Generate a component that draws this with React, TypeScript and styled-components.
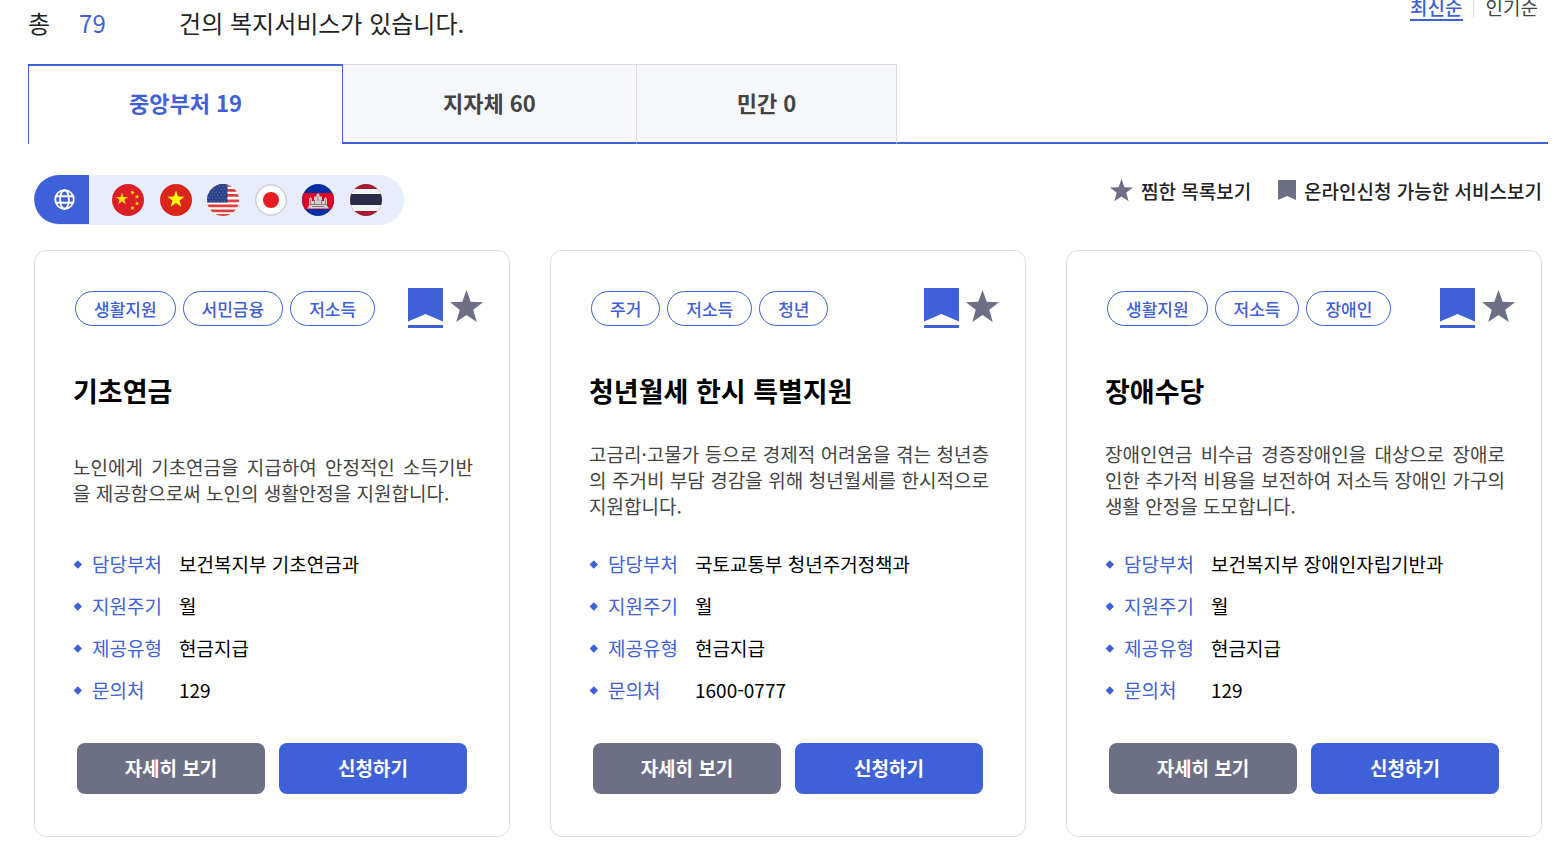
import React, { useState } from "react";
import styled, { createGlobalStyle } from "styled-components";

const BLUE = "#3f61d7";
const GRAY = "#6d7084";

const GlobalStyle = createGlobalStyle`
  *, *::before, *::after { box-sizing: border-box; }
  body {
    margin: 0;
    background: #fff;
    color: #222;
    font-family: "Noto Sans CJK KR", "Noto Sans", sans-serif;
    font-size: 19px;
  }
  h1, h2, p, ul, dl, dd { margin: 0; padding: 0; }
  ul { list-style: none; }
  button {
    margin: 0;
    padding: 0;
    border: 0;
    background: none;
    color: inherit;
    font: inherit;
    cursor: pointer;
  }
`;

const Page = styled.main`
  padding: 0 15px 12px 28px;
`;

const Header = styled.header`
  display: flex;
  justify-content: space-between;
  align-items: flex-start;
  height: 64px;
  padding-right: 10px;
`;

const Total = styled.h1`
  display: flex;
  font-size: 24px;
  font-weight: 400;
  line-height: 46px;
`;

const TotalCount = styled.span`
  width: 100px;
  margin-left: 29px;
  color: ${BLUE};
`;

const SortList = styled.div`
  display: flex;
`;

const SortButton = styled.button<{ $active: boolean }>`
  height: 21px;
  padding-bottom: 6px;
  border-bottom: 2px solid ${(p) => (p.$active ? BLUE : "transparent")};
  color: ${(p) => (p.$active ? BLUE : "#444")};
  font-weight: ${(p) => (p.$active ? 500 : 400)};
  line-height: 13px;
`;

const SortDivider = styled.span`
  width: 1px;
  height: 18px;
  margin: 0 12px 0 10px;
  background: #ddd;
`;

const Tabs = styled.div`
  display: flex;
  height: 80px;
  background: linear-gradient(${BLUE}, ${BLUE}) bottom / 100% 2px no-repeat;
`;

const Tab = styled.button<{ $active: boolean }>`
  display: flex;
  align-items: center;
  gap: 6px;
  padding: 0 100px ${(p) => (p.$active ? 6 : 4)}px;
  border-style: solid;
  border-width: ${(p) => (p.$active ? "2px 1px 0" : "1px 1px 2px 0")};
  border-color: ${(p) => (p.$active ? BLUE : `#ddd #ddd ${BLUE}`)};
  background: ${(p) => (p.$active ? "#fff" : "#f6f7fb")};
  color: ${(p) => (p.$active ? BLUE : "#444")};
  font-size: 22px;
  font-weight: 700;
`;

const Toolbar = styled.div`
  display: flex;
  justify-content: space-between;
  align-items: flex-start;
  padding: 31px 6px 25px;
`;

const LanguageBar = styled.div`
  display: flex;
  width: 370px;
  height: 50px;
  border-radius: 25px;
  overflow: hidden;
  background: #e7eefa;
`;

const LanguageMark = styled.span`
  display: flex;
  align-items: center;
  justify-content: center;
  width: 55px;
  height: 49px;
  padding-left: 6px;
  border-radius: 0 0 0 25px;
  background: ${BLUE};
`;

const FlagList = styled.div`
  display: flex;
  flex: 1;
  align-items: center;
  justify-content: space-between;
  padding: 0 22px 0 23px;
`;

const FlagButton = styled.button`
  display: flex;
  border-radius: 50%;
`;

const Filters = styled.div`
  display: flex;
  gap: 27px;
`;

const FilterButton = styled.button`
  display: flex;
  align-items: center;
  gap: 8px;
  height: 30px;
  font-weight: 500;
`;

const CardGrid = styled.section`
  display: grid;
  grid-template-columns: repeat(3, minmax(0, 1fr));
  gap: 40px;
  padding: 0 6px;
`;

const Card = styled.article`
  padding: 37px 0 42px;
  border: 1px solid #ddd;
  border-radius: 12px;
`;

const CardHead = styled.div`
  display: flex;
  justify-content: space-between;
  padding: 0 26px 0 40px;
`;

const TagList = styled.ul`
  display: flex;
  gap: 7px;
  padding-top: 3px;
`;

const Tag = styled.li`
  height: 35px;
  padding: 0 18px;
  border: 1px solid ${BLUE};
  border-radius: 18px;
  color: ${BLUE};
  font-size: 17px;
  font-weight: 500;
  line-height: 33px;
`;

const Marks = styled.div`
  display: flex;
  align-items: flex-start;
  gap: 7px;
`;

const StarButton = styled.button`
  display: flex;
  padding-top: 2px;
`;

const CardTitle = styled.h2`
  padding: 43px 38px 0;
  color: #000;
  font-size: 27px;
  font-weight: 700;
  line-height: 40px;
`;

const Description = styled.div`
  display: flex;
  align-items: center;
  min-height: 78px;
  margin-top: 30px;
  padding: 0 36px 0 38px;
  color: #444;
  line-height: 26px;
  text-align: justify;
`;

const Facts = styled.dl`
  display: grid;
  gap: 14px;
  padding: 31px 38px 39px;
  color: #000;
  line-height: 28px;
`;

const Fact = styled.div`
  display: flex;
  align-items: center;
`;

const Term = styled.dt`
  display: flex;
  align-items: center;
  gap: 10px;
  width: 106px;
  color: ${BLUE};
`;

const Actions = styled.div`
  display: grid;
  grid-template-columns: 1fr 1fr;
  gap: 14px;
  padding: 0 42px;
`;

const ActionButton = styled.button<{ $primary?: boolean }>`
  height: 51px;
  padding-bottom: 2px;
  border-radius: 8px;
  background: ${(p) => (p.$primary ? BLUE : GRAY)};
  color: #fff;
  font-weight: 700;
`;

const Star = ({ size }: { size: number }) => (
  <svg width={size} height={size} viewBox="0 0 32 32" aria-hidden="true">
    <path
      fill={GRAY}
      d="M16 0l4.1 11.4L32 11.8l-9.4 7.4L25.9 31 16 24.3 6.100 31l3.300-11.800L0 11.800l11.900-.4z"
    />
  </svg>
);

const SmallBookmark = () => (
  <svg width="18" height="20" viewBox="0 0 18 20" aria-hidden="true">
    <path fill={GRAY} d="M0 0h18v20l-9-4-9 4z" />
  </svg>
);

const CardBookmark = () => (
  <svg width="35" height="40" viewBox="0 0 35 40" role="img" aria-label="온라인신청 가능">
    <path fill={BLUE} d="M0 0h35v33.500L17.500 26 0 33.500zM0 37h35v3H0z" />
  </svg>
);

const Diamond = () => (
  <svg width="9" height="9" viewBox="0 0 9 9" aria-hidden="true">
    <path
      fill={BLUE}
      stroke={BLUE}
      strokeWidth="1.500"
      strokeLinejoin="round"
      d="M4.800 1.200L8 4.500 4.800 7.800 1.600 4.500z"
    />
  </svg>
);

const Globe = () => (
  <svg
    width="21"
    height="21"
    viewBox="0 0 21 21"
    fill="none"
    stroke="#fff"
    strokeWidth="1.900"
    aria-hidden="true"
  >
    <circle cx="10.500" cy="10.500" r="9.300" />
    <ellipse cx="10.500" cy="10.500" rx="4.400" ry="9.300" />
    <path d="M1.800 7.300h17.400M1.800 13.700h17.400" />
  </svg>
);

const starPoints = (cx: number, cy: number, r: number, turn = 0) =>
  Array.from({ length: 10 }, (_, i) => {
    const angle = ((i * 36 - 90 + turn) * Math.PI) / 180;
    const radius = i % 2 ? r * 0.4 : r;
    return `${cx + radius * Math.cos(angle)},${cy + radius * Math.sin(angle)}`;
  }).join(" ");

const flags: { code: string; name: string; art: React.ReactNode }[] = [
  {
    code: "cn",
    name: "중국어",
    art: (
      <>
        <path fill="#dc1f26" d="M0 0h32v32H0z" />
        <g fill="#ffde00">
          <polygon points={starPoints(10, 15, 6.5)} />
          <polygon points={starPoints(20.500, 8.500, 2.500, 20)} />
          <polygon points={starPoints(25, 12.800, 2.500, 10)} />
          <polygon points={starPoints(25, 19.500, 2.500)} />
          <polygon points={starPoints(20.500, 24, 2.500, 20)} />
        </g>
      </>
    ),
  },
  {
    code: "vn",
    name: "베트남어",
    art: (
      <>
        <path fill="#da251d" d="M0 0h32v32H0z" />
        <polygon fill="#ff0" points={starPoints(16, 15.500, 9)} />
      </>
    ),
  },
  {
    code: "us",
    name: "영어",
    art: (
      <>
        <path fill="#fff" d="M0 0h32v32H0z" />
        {[0, 5, 10, 15.500, 20.500, 25.500, 30].map((y) => (
          <path key={y} fill="#e0403f" d={`M0 ${y}h32v2.700H0z`} />
        ))}
        <path fill="#2a4088" d="M0 0h20.500v18.500H0z" />
        <g fill="#8b9ac4">
          {[2, 5, 8, 11, 14, 17].map((y, row) =>
            [2, 5.500, 9, 12.500, 16, 19].map((x) => (
              <circle key={`${x}-${y}`} cx={x - (row % 2) * 1.7} cy={y} r="0.600" />
            ))
          )}
        </g>
      </>
    ),
  },
  {
    code: "jp",
    name: "일본어",
    art: (
      <>
        <circle cx="16" cy="16" r="15.300" fill="#fff" stroke="#c8cbd0" strokeWidth="1.400" />
        <circle cx="16" cy="16" r="8" fill="#e81c24" />
      </>
    ),
  },
  {
    code: "kh",
    name: "캄보디아어",
    art: (
      <>
        <path fill="#032ea1" d="M0 0h32v32H0z" />
        <path fill="#e00025" d="M0 9h32v16H0z" />
        <path
          fill="#d5d0d0"
          d="M5 24.500l2-3V15l1.500-2 1.500 2v2h2v-4l1-1 1 1 .5-2 1.500-2 1.500 2 .5 2 1-1 1 1v4h2v-2l1.500-2 1.500 2v6.500l2 3z"
        />
        <path
          stroke="#8d7f83"
          strokeWidth="1"
          d="M7 20.500h18M8.500 15v5M12.500 16v4M16 12v5M19.500 16v4M23.500 15v5M10 22.500h12"
        />
      </>
    ),
  },
  {
    code: "th",
    name: "태국어",
    art: (
      <>
        <path fill="#a51931" d="M0 0h32v32H0z" />
        <path fill="#f4f5f8" d="M0 5h32v22H0z" />
        <path fill="#2d2a4a" d="M0 10h32v11H0z" />
      </>
    ),
  },
];

const tabs = [
  { label: "중앙부처", count: 19 },
  { label: "지자체", count: 60 },
  { label: "민간", count: 0 },
];

const sorts = ["최신순", "인기순"];

const services = [
  {
    tags: ["생활지원", "서민금융", "저소득"],
    title: "기초연금",
    description:
      "노인에게 기초연금을 지급하여 안정적인 소득기반을 제공함으로써 노인의 생활안정을 지원합니다.",
    department: "보건복지부 기초연금과",
    contact: "129",
  },
  {
    tags: ["주거", "저소득", "청년"],
    title: "청년월세 한시 특별지원",
    description:
      "고금리·고물가 등으로 경제적 어려움을 겪는 청년층의 주거비 부담 경감을 위해 청년월세를 한시적으로 지원합니다.",
    department: "국토교통부 청년주거정책과",
    contact: "1600-0777",
  },
  {
    tags: ["생활지원", "저소득", "장애인"],
    title: "장애수당",
    description:
      "장애인연금 비수급 경증장애인을 대상으로 장애로 인한 추가적 비용을 보전하여 저소득 장애인 가구의 생활 안정을 도모합니다.",
    department: "보건복지부 장애인자립기반과",
    contact: "129",
  },
];

function ServiceCard({ service }: { service: (typeof services)[number] }) {
  const facts = [
    ["담당부처", service.department],
    ["지원주기", "월"],
    ["제공유형", "현금지급"],
    ["문의처", service.contact],
  ];
  return (
    <Card>
      <CardHead>
        <TagList>
          {service.tags.map((tag) => (
            <Tag key={tag}>{tag}</Tag>
          ))}
        </TagList>
        <Marks>
          <CardBookmark />
          <StarButton type="button" aria-label={`${service.title} 찜하기`}>
            <Star size={33} />
          </StarButton>
        </Marks>
      </CardHead>
      <CardTitle>{service.title}</CardTitle>
      <Description>
        <p>{service.description}</p>
      </Description>
      <Facts>
        {facts.map(([term, value]) => (
          <Fact key={term}>
            <Term>
              <Diamond />
              {term}
            </Term>
            <dd>{value}</dd>
          </Fact>
        ))}
      </Facts>
      <Actions>
        <ActionButton type="button">자세히 보기</ActionButton>
        <ActionButton type="button" $primary>
          신청하기
        </ActionButton>
      </Actions>
    </Card>
  );
}

export default function App() {
  const [tab, setTab] = useState(0);
  const [sort, setSort] = useState(0);
  return (
    <>
      <GlobalStyle />
      <Page lang="ko">
        <Header>
          <Total>
            총<TotalCount>79</TotalCount>건의 복지서비스가 있습니다.
          </Total>
          <SortList>
            {sorts.map((name, i) => (
              <React.Fragment key={name}>
                {i > 0 && <SortDivider />}
                <SortButton type="button" $active={i === sort} onClick={() => setSort(i)}>
                  {name}
                </SortButton>
              </React.Fragment>
            ))}
          </SortList>
        </Header>
        <Tabs role="tablist">
          {tabs.map(({ label, count }, i) => (
            <Tab
              key={label}
              type="button"
              role="tab"
              aria-selected={i === tab}
              $active={i === tab}
              onClick={() => setTab(i)}
            >
              <span>{label}</span>
              <span>{count}</span>
            </Tab>
          ))}
        </Tabs>
        <Toolbar>
          <LanguageBar>
            <LanguageMark>
              <Globe />
            </LanguageMark>
            <FlagList>
              {flags.map(({ code, name, art }) => (
                <FlagButton key={code} type="button" aria-label={name}>
                  <svg width="32" height="32" viewBox="0 0 32 32" aria-hidden="true">
                    <clipPath id={`flag-${code}`}>
                      <circle cx="16" cy="16" r="16" />
                    </clipPath>
                    <g clipPath={`url(#flag-${code})`}>{art}</g>
                  </svg>
                </FlagButton>
              ))}
            </FlagList>
          </LanguageBar>
          <Filters>
            <FilterButton type="button">
              <Star size={23} />
              찜한 목록보기
            </FilterButton>
            <FilterButton type="button">
              <SmallBookmark />
              온라인신청 가능한 서비스보기
            </FilterButton>
          </Filters>
        </Toolbar>
        <CardGrid>
          {services.map((service) => (
            <ServiceCard key={service.title} service={service} />
          ))}
        </CardGrid>
      </Page>
    </>
  );
}
